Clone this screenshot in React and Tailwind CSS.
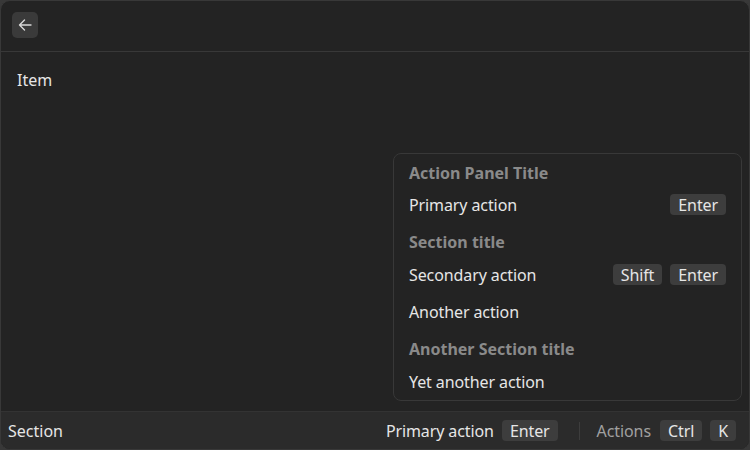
import React from "react";

function Kbd({ children }) {
  return (
    <span className="inline-flex h-[21px] items-center rounded-[4px] bg-[#3d3d3d] px-[8px] text-[16px] leading-none tracking-[-0.1px] text-[#e6e6e6]">
      {children}
    </span>
  );
}

function ActionRow({ label, keys = [] }) {
  return (
    <div className="flex h-[37px] items-center justify-between px-[15px]">
      <span className="text-[16px] tracking-[-0.1px] text-[#e6e6e6]">{label}</span>
      <div className="flex gap-[8px]">
        {keys.map((k) => (
          <Kbd key={k}>{k}</Kbd>
        ))}
      </div>
    </div>
  );
}

function SectionTitle({ children, first }) {
  return (
    <div className={first ? "flex h-[32px] items-center px-[15px] pt-[5px] text-[16px] font-bold text-[#8a8a8a]" : "flex h-[33px] items-center px-[15px] pt-[5px] text-[16px] font-bold text-[#8a8a8a]"}>
      {children}
    </div>
  );
}

export default function App() {
  return (
    <div
      className="h-[450px] w-[750px] bg-[#383838]"
      style={{ fontFamily: '"Noto Sans", "Open Sans", sans-serif' }}
    >
      <div className="relative flex h-full w-full flex-col overflow-hidden rounded-[10px] border border-[#383838] bg-[#232323]">
        <div className="flex h-[51px] shrink-0 items-start border-b border-[#383838] px-[11px] pt-[11px]">
          <button className="flex h-[26px] w-[26px] items-center justify-center rounded-[5px] bg-[#3a3a3a]">
            <svg width="14" height="14" viewBox="0 0 14 14" fill="none" stroke="#d8d8d8" strokeWidth="1.4" strokeLinecap="round" strokeLinejoin="round">
              <path d="M13 7H1.5M6.5 2L1.5 7l5 5" />
            </svg>
          </button>
        </div>
        <div className="flex-1 px-[16px] pt-[16px]">
          <div className="text-[16px] text-[#e6e6e6]">Item</div>
        </div>
        <div className="flex h-[38px] shrink-0 items-center justify-between border-t border-[#333333] bg-[#2b2b2b] pl-[7px] pr-[13px]">
          <span className="text-[16px] text-[#e6e6e6]">Section</span>
          <div className="flex items-center">
            <span className="mr-[8px] text-[16px] tracking-[-0.1px] text-[#e6e6e6]">Primary action</span>
            <Kbd>Enter</Kbd>
            <div className="ml-[21px] mr-[17px] h-[18px] w-px bg-[#3d3d3d]" />
            <span className="mr-[9px] text-[16px] tracking-[-0.1px] text-[#a0a0a0]">Actions</span>
            <div className="flex gap-[8px]">
              <Kbd>Ctrl</Kbd>
              <Kbd>K</Kbd>
            </div>
          </div>
        </div>

        <div className="absolute left-[392px] top-[152px] w-[349px] rounded-[8px] border border-[#383838] bg-[#232323]">
          <SectionTitle first>Action Panel Title</SectionTitle>
          <ActionRow label="Primary action" keys={["Enter"]} />
          <SectionTitle>Section title</SectionTitle>
          <ActionRow label="Secondary action" keys={["Shift", "Enter"]} />
          <ActionRow label="Another action" />
          <SectionTitle>Another Section title</SectionTitle>
          <ActionRow label="Yet another action" />
        </div>
      </div>
    </div>
  );
}
